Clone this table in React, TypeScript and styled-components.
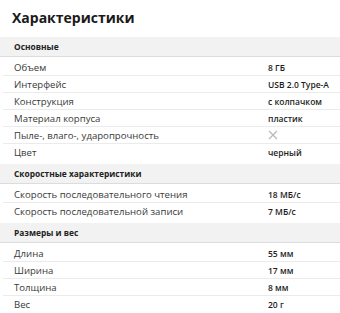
import React from "react";
import styled, { createGlobalStyle } from "styled-components";

const Global = createGlobalStyle`
  html, body { margin: 0; padding: 0; background: #fff; }
  body { font-family: "Open Sans", "Liberation Sans", sans-serif; }
`;

const Page = styled.div`
  width: 340px;
  display: flex;
  flex-direction: column;
`;

const Title = styled.h1`
  margin: 0;
  padding: 8px 0 0 12px;
  height: 29px;
  font-size: 14px;
  font-weight: 700;
  color: #1a1a1a;
  line-height: 20px;
`;

const Section = styled.div`
  display: flex;
  flex-direction: column;
  & + & {
    margin-top: 3px;
  }
`;

const SectionHead = styled.div`
  height: 19px;
  margin-bottom: 2px;
  display: flex;
  align-items: center;
  padding-left: 14px;
  background: #f2f2f2;
  border-bottom: 1px solid #dcdcdc;
  font-size: 8.4px;
  font-weight: 700;
  color: #222;
`;

const Row = styled.div<{ $last?: boolean }>`
  height: 16px;
  margin-left: 3px;
  display: grid;
  grid-template-columns: 265px 1fr;
  align-items: center;
  border-bottom: 1px solid ${(p) => (p.$last ? "transparent" : "#ebebeb")};
  font-size: 9.6px;
`;

const Label = styled.span`
  padding-left: 11px;
  color: #3a3a3a;
`;

const Value = styled.span`
  color: #1e1e1e;
  font-weight: 600;
  font-size: 8.5px;
  display: flex;
  align-items: center;
`;

const Cross = () => (
  <svg width="10" height="10" viewBox="0 0 10 10">
    <path d="M1 1 L9 9 M9 1 L1 9" stroke="#b8b8b8" strokeWidth="1.2" fill="none" />
  </svg>
);

type Item = { label: string; value: React.ReactNode };

const sections: { title: string; items: Item[] }[] = [
  {
    title: "Основные",
    items: [
      { label: "Объем", value: "8 ГБ" },
      { label: "Интерфейс", value: "USB 2.0 Type-A" },
      { label: "Конструкция", value: "с колпачком" },
      { label: "Материал корпуса", value: "пластик" },
      { label: "Пыле-, влаго-, ударопрочность", value: <Cross /> },
      { label: "Цвет", value: "черный" },
    ],
  },
  {
    title: "Скоростные характеристики",
    items: [
      { label: "Скорость последовательного чтения", value: "18 МБ/с" },
      { label: "Скорость последовательной записи", value: "7 МБ/с" },
    ],
  },
  {
    title: "Размеры и вес",
    items: [
      { label: "Длина", value: "55 мм" },
      { label: "Ширина", value: "17 мм" },
      { label: "Толщина", value: "8 мм" },
      { label: "Вес", value: "20 г" },
    ],
  },
];

export default function App() {
  return (
    <Page>
      <Global />
      <Title>Характеристики</Title>
      {sections.map((s) => (
        <Section key={s.title}>
          <SectionHead>{s.title}</SectionHead>
          {s.items.map((it, i) => (
            <Row key={it.label} $last={i === s.items.length - 1}>
              <Label>{it.label}</Label>
              <Value>{it.value}</Value>
            </Row>
          ))}
        </Section>
      ))}
    </Page>
  );
}
